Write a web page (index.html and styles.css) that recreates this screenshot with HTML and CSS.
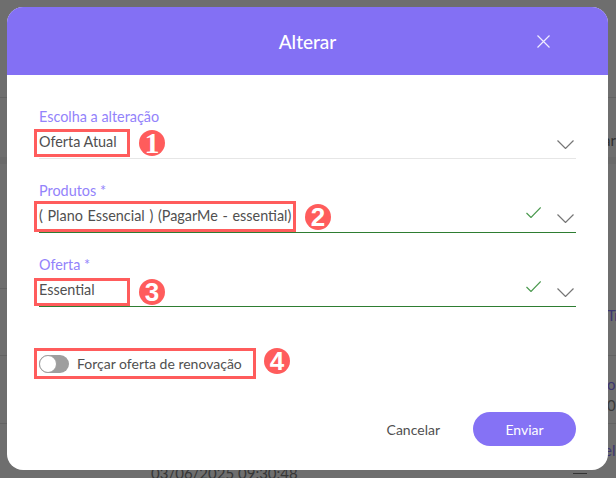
FILE: index.html
```html
<!DOCTYPE html>
<html lang="pt-BR">
<head>
    <meta charset="UTF-8">
    <meta name="viewport" content="width=device-width, initial-scale=1.0">
    <title>Alterar</title>
    <link rel="stylesheet" href="styles.css">
</head>
<body>

    <!-- pagina por tras do modal -->
    <div class="backdrop">
        <div class="bg-line bg-line-1"></div>
        <div class="bg-line bg-line-2"></div>
        <div class="bg-line bg-line-3"></div>
        <div class="bg-line bg-line-4"></div>
        <div class="bg-band"></div>
        <span class="bg-text bg-ar">ar</span>
        <span class="bg-text bg-link bg-tr">Tr</span>
        <span class="bg-text bg-link bg-o">o</span>
        <span class="bg-text bg-zero">0</span>
        <span class="bg-text bg-link bg-el">el</span>
        <span class="bg-text bg-date">03/06/2025 09:30:48</span>
        <div class="bg-dash"></div>
    </div>

    <div class="modal">
        <div class="modal-header">
            <h2>Alterar</h2>
            <svg class="close-icon" width="13" height="13" viewBox="0 0 13 13"><path d="M.5.5l12 12M12.5.5l-12 12"/></svg>
        </div>

        <form class="modal-body">
            <div class="field">
                <label>Escolha a alteração</label>
                <div class="select-row">
                    <span class="mark mark-short mark-first">Oferta Atual</span>
                    <span class="badge badge-first badge-serif">1</span>
                    <svg class="chevron" width="17" height="9" viewBox="0 0 17 9"><path d="M.5.5l8 8 8-8"/></svg>
                </div>
            </div>

            <div class="field">
                <label>Produtos *</label>
                <div class="select-row valid">
                    <span class="mark mark-long">( Plano Essencial ) (PagarMe - essential)</span>
                    <span class="badge badge-second">2</span>
                    <svg class="check" width="15" height="11" viewBox="0 0 15 11"><path d="M.5 6l4.500 4.500L14.700.5"/></svg>
                    <svg class="chevron" width="17" height="9" viewBox="0 0 17 9"><path d="M.5.5l8 8 8-8"/></svg>
                </div>
            </div>

            <div class="field">
                <label>Oferta *</label>
                <div class="select-row valid">
                    <span class="mark mark-short mark-third">Essential</span>
                    <span class="badge badge-third">3</span>
                    <svg class="check" width="15" height="11" viewBox="0 0 15 11"><path d="M.5 6l4.500 4.500L14.700.5"/></svg>
                    <svg class="chevron" width="17" height="9" viewBox="0 0 17 9"><path d="M.5.5l8 8 8-8"/></svg>
                </div>
            </div>

            <div class="toggle-row">
                <div class="mark mark-toggle">
                    <span class="switch"><span class="knob"></span></span>
                    <span>Forçar oferta de renovação</span>
                </div>
                <span class="badge badge-fourth">4</span>
            </div>

            <div class="modal-footer">
                <button type="button" class="btn-cancel">Cancelar</button>
                <button type="button" class="btn-send">Enviar</button>
            </div>
        </form>
    </div>

</body>
</html>
```

FILE: styles.css
```css
html, body {
    height: 100%;
}
body {
    margin: 0;
    padding: 7px 8px 8px 7px;
    box-sizing: border-box;
    background: #6e6e6e;
    font-family: 'Lato', sans-serif;
    color: #505050;
    overflow: hidden;
    position: relative;
}

/* fundo */
.backdrop {
    position: absolute;
    inset: 0;
}
.bg-line {
    position: absolute;
    left: 0;
    right: 0;
    height: 1px;
    background: #626262;
}
.bg-line-1 { top: 97px; }
.bg-line-2 { top: 288px; right: 590px; }
.bg-line-3 { top: 355px; }
.bg-line-4 { top: 423px; }
.bg-band {
    position: absolute;
    top: 157px;
    left: 0;
    right: 0;
    height: 7px;
    background: #696969;
}
.bg-text {
    position: absolute;
    font-size: 15px;
    line-height: 18px;
    color: #2f2f2f;
    white-space: nowrap;
}
.bg-link {
    color: #3d3670;
}
.bg-ar { left: 603px; top: 131px; }
.bg-tr { left: 607px; top: 306px; }
.bg-o { left: 607px; top: 375px; }
.bg-zero { left: 607px; top: 396px; color: #3a3a3a; }
.bg-el { left: 604px; top: 441px; }
.bg-date { left: 151px; top: 464px; color: #363636; }
.bg-dash {
    position: absolute;
    left: 573px;
    top: 473px;
    width: 14px;
    height: 1px;
    background: #333;
}

/* modal */
.modal {
    position: relative;
    width: 601px;
    height: 463px;
    background: #ffffff;
    border-radius: 16px;
    overflow: hidden;
}
.modal-header {
    height: 68px;
    background: #8370f4;
    display: grid;
    grid-template-columns: 1fr auto 1fr;
    align-items: center;
}
.modal-header h2 {
    grid-column: 2;
    margin: 0;
    font-size: 19px;
    font-weight: 500;
    color: #ffffff;
}
.close-icon {
    grid-column: 3;
    justify-self: end;
    margin-right: 58px;
    fill: none;
    stroke: #f0edff;
    stroke-width: 1.2;
}
.modal-body {
    padding: 32px 32px 0;
}

/* campos */
.field {
    margin-bottom: 22px;
}
.field label {
    display: block;
    height: 20px;
    line-height: 20px;
    font-size: 14.4px;
    color: #9383fb;
}
.select-row {
    height: 31px;
    display: flex;
    align-items: flex-start;
    border-bottom: 1px solid #e6e6e6;
    font-size: 14.4px;
}
.select-row.valid {
    border-bottom-color: #2e7d32;
}
.mark {
    box-sizing: border-box;
    border: 3px solid #ff5c5c;
    margin-left: -5px;
    padding-left: 2px;
    white-space: nowrap;
}
.mark-short {
    width: 96px;
    height: 28px;
    line-height: 20px;
}
.mark-first {
    margin-top: 2px;
}
.mark-third {
    margin-top: 3px;
    line-height: 18px;
}
.mark-long {
    width: 262px;
    height: 31px;
    line-height: 24px;
    word-spacing: 1px;
}
.mark-toggle {
    width: 222px;
    height: 31px;
    display: flex;
    align-items: center;
    gap: 8px;
    font-size: 14px;
}
.badge {
    flex: none;
    width: 26px;
    height: 26px;
    border-radius: 50%;
    background: #ff5c5c;
    color: #ffffff;
    font-family: 'Liberation Sans', sans-serif;
    font-size: 26px;
    font-weight: 700;
    line-height: 26px;
    text-align: center;
}
.badge-serif {
    font-family: 'Liberation Serif', serif;
    font-size: 30px;
}
.badge-first {
    margin: 3px 0 0 9px;
}
.badge-second {
    margin: 3px 0 0 9px;
}
.badge-third {
    margin: 4px 0 0 9px;
}
.badge-fourth {
    margin-left: 8px;
}
.check {
    margin: 6px 0 0 auto;
    fill: none;
    stroke: #4c9a50;
    stroke-width: 1.2;
}
.chevron {
    margin: 13px 2px 0 16px;
    fill: none;
    stroke: #767676;
    stroke-width: 1.2;
}
.select-row > .badge + .chevron {
    margin-left: auto;
}

/* switch */
.toggle-row {
    margin-top: 41px;
    display: flex;
    align-items: flex-start;
}
.switch {
    flex: none;
    width: 30px;
    height: 18px;
    border-radius: 9px;
    background: #9e9e9e;
}
.knob {
    display: block;
    box-sizing: border-box;
    width: 18px;
    height: 18px;
    border-radius: 50%;
    background: #ffffff;
    border: 1px solid #9e9e9e;
}

/* rodape */
.modal-footer {
    margin-top: 33px;
    display: flex;
    justify-content: flex-end;
    align-items: center;
    gap: 33px;
}
.modal-footer button {
    border: none;
    padding: 0;
    font-family: inherit;
    font-size: 14px;
    cursor: pointer;
}
.btn-cancel {
    background: none;
    color: #505050;
}
.btn-send {
    width: 103px;
    height: 34px;
    border-radius: 17px;
    background: #8572f5;
    color: #ffffff;
}
```
